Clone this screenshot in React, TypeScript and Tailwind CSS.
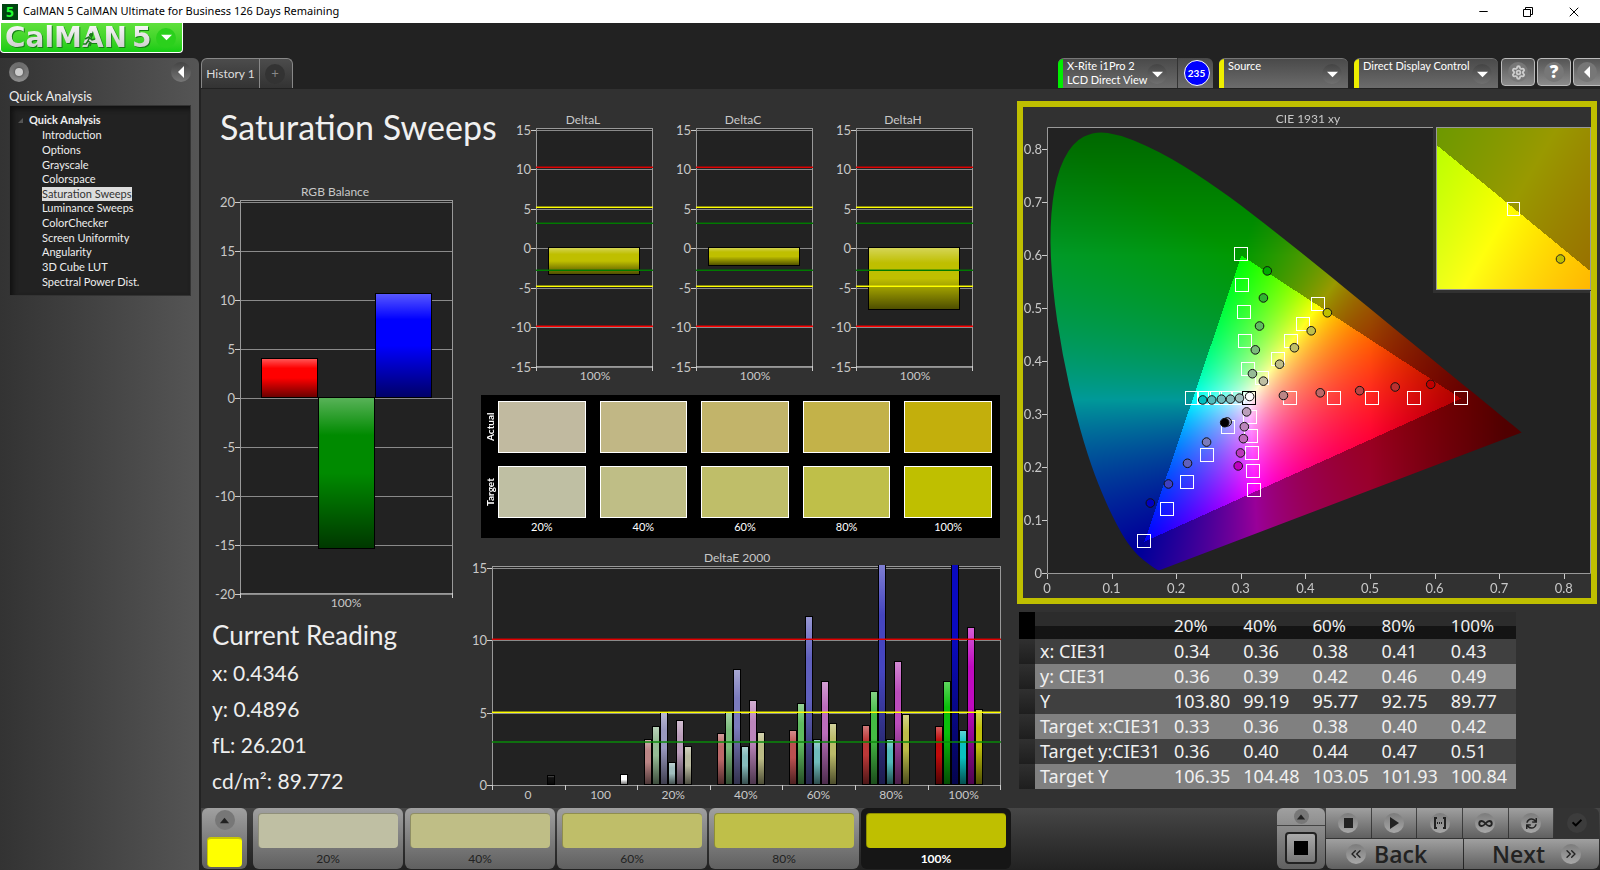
import { useLayoutEffect, useRef, type ReactNode } from 'react';
import { ChevronsLeft, ChevronsRight, Infinity as InfinityIcon, Minus, Settings, X } from 'lucide-react';
import { FaCheck, FaSync } from 'react-icons/fa';

const LEVELS = ['20%', '40%', '60%', '80%', '100%'];
const ACTUAL = ['#c1baa0', '#c1b785', '#c2b46a', '#c3b249', '#c3af0c'];
const TARGET = ['#bfbfa3', '#bfbe86', '#bfbe69', '#bfbf49', '#bfbf00'];

const NAV = [
  'Introduction',
  'Options',
  'Grayscale',
  'Colorspace',
  'Saturation Sweeps',
  'Luminance Sweeps',
  'ColorChecker',
  'Screen Uniformity',
  'Angularity',
  '3D Cube LUT',
  'Spectral Power Dist.',
];

const READINGS = [
  ['x:', '0.4346'],
  ['y:', '0.4896'],
  ['fL:', '26.201'],
  ['cd/m²:', '89.772'],
];

const ROWS = [
  ['x: CIE31', '0.34', '0.36', '0.38', '0.41', '0.43'],
  ['y: CIE31', '0.36', '0.39', '0.42', '0.46', '0.49'],
  ['Y', '103.80', '99.19', '95.77', '92.75', '89.77'],
  ['Target x:CIE31', '0.33', '0.36', '0.38', '0.40', '0.42'],
  ['Target y:CIE31', '0.36', '0.40', '0.44', '0.47', '0.51'],
  ['Target Y', '106.35', '104.48', '103.05', '101.93', '100.84'],
];

/* ---------- small pieces ---------- */

function Caret({ dir, size = 12, className = '' }: { dir: 'up' | 'down' | 'left' | 'right'; size?: number; className?: string }) {
  const points = { up: '1,9 6,3 11,9', down: '0,3 12,3 6,9', left: '9,0 9,12 3,6', right: '2,0 11,6 2,12' }[dir];
  return (
    <svg viewBox="0 0 12 12" width={size} height={size} className={className} aria-hidden="true">
      <polygon points={points} fill="currentColor" />
    </svg>
  );
}

function Knob({ children, className = '' }: { children?: ReactNode; className?: string }) {
  return (
    <span className={`flex h-5 w-5 shrink-0 items-center justify-center rounded-full ${className}`}>{children}</span>
  );
}

/* ---------- bar charts ---------- */

function Gloss() {
  return (
    <linearGradient id="gloss" x1="0" y1="0" x2="0" y2="1">
      <stop offset="0" stopColor="#fff" stopOpacity="0.35" />
      <stop offset="0.25" stopColor="#fff" stopOpacity="0" />
      <stop offset="0.5" stopColor="#000" stopOpacity="0" />
      <stop offset="1" stopColor="#000" stopOpacity="0.6" />
    </linearGradient>
  );
}

function Bar({ x, y, w, h, color }: { x: number; y: number; w: number; h: number; color: string }) {
  return (
    <g stroke="#000" shapeRendering="crispEdges">
      <rect x={x} y={y} width={w} height={h} fill={color} />
      <rect x={x} y={y} width={w} height={h} fill="url(#gloss)" />
    </g>
  );
}

type FrameProps = {
  left: number;
  right: number;
  top: number;
  bottom: number;
  zero: number;
  unit: number;
  ticks: number[];
};

function Frame({ left, right, top, bottom, zero, unit, ticks }: FrameProps) {
  return (
    <g shapeRendering="crispEdges">
      <rect x={left} y={top} width={right - left} height={bottom - top} fill="#222" />
      {ticks.map((t) => {
        const y = Math.round(zero - t * unit);
        return (
          <g key={t}>
            <rect x={left} y={y} width={right - left} height={1} fill="#8a8a8a" />
            <rect x={left - 5} y={y} width={5} height={1} fill="#ccc" />
            <text x={left - 5} y={y + 5} textAnchor="end" className="fill-[#c8c8c8] text-[13px]">
              {t}
            </text>
          </g>
        );
      })}
      <rect x={left + 0.5} y={top + 0.5} width={right - left} height={bottom - top} fill="none" stroke="#999" />
    </g>
  );
}

function Limit({ left, right, y, color }: { left: number; right: number; y: number; color: string }) {
  return (
    <g shapeRendering="crispEdges">
      <rect x={left} y={y} width={right - left} height={1} fill={color} />
      <rect x={left} y={y - 1} width={right - left} height={1} fill={color} opacity={0.45} />
    </g>
  );
}

function RgbBalance() {
  return (
    <svg viewBox="0 0 250 432" className="mt-6 w-[250px]" role="img" aria-label="RGB Balance">
      <defs>
        <Gloss />
      </defs>
      <text x={123} y={16} textAnchor="middle" className="fill-[#c8c8c8] text-[12px]">RGB Balance</text>
      <Frame left={28} right={240} top={20} bottom={413} zero={218} unit={9.8} ticks={[20, 15, 10, 5, 0, -5, -10, -15, -20]} />
      <Bar x={49.5} y={178.5} w={56} h={39} color="#f00" />
      <Bar x={106.5} y={217.5} w={56} h={151} color="#008a00" />
      <Bar x={163.5} y={113.5} w={56} h={104} color="#00f" />
      <path d="M28.5 413v5M240.5 413v5" stroke="#ccc" />
      <text x={134} y={427} textAnchor="middle" className="fill-[#c8c8c8] text-[12px]">100%</text>
    </svg>
  );
}

function DeltaChart({ title, value }: { title: string; value: number }) {
  const limits: [number, string][] = [
    [57, '#e00000'],
    [97, '#ff0'],
    [113, '#007a00'],
    [160, '#007a00'],
    [176, '#ff0'],
    [216, '#f00'],
  ];
  return (
    <svg viewBox="0 0 160 276" className="min-w-0 flex-1" role="img" aria-label={title}>
      <text x={83} y={14} textAnchor="middle" className="fill-[#c8c8c8] text-[12px]">{title}</text>
      <Frame left={36} right={152} top={18} bottom={256} zero={138} unit={7.9} ticks={[15, 10, 5, 0, -5, -10, -15]} />
      <Bar x={48.5} y={137.5} w={91} h={Math.round(value * 7.9)} color="#bfbf00" />
      {limits.map(([y, color]) => (
        <Limit key={y} left={36} right={153} y={y} color={color} />
      ))}
      <path d="M36.5 256v5M152.5 256v5" stroke="#ccc" />
      <text x={95} y={270} textAnchor="middle" className="fill-[#c8c8c8] text-[12px]">100%</text>
    </svg>
  );
}

const DELTA_E: { label: string; bars: [number, string][] }[] = [
  { label: '0', bars: [] },
  { label: '100', bars: [] },
  { label: '20%', bars: [[3.1, '#bb8585'], [4, '#96bb96'], [5, '#9999bf'], [1.5, '#a0bdbd'], [4.4, '#bb9ebb'], [2.6, '#bbbba0']] },
  { label: '40%', bars: [[3.5, '#bb6868'], [5, '#7bbb7b'], [7.9, '#7b7bbd'], [2.6, '#85bbbb'], [5.8, '#bb85bb'], [3.6, '#bbbb85']] },
  { label: '60%', bars: [[3.7, '#bb5050'], [5.6, '#5fbb5f'], [11.6, '#6060bd'], [3.1, '#70bbbb'], [7.1, '#bb6cbb'], [4.2, '#bbbb6a']] },
  { label: '80%', bars: [[4.1, '#bb3838'], [6.4, '#44bb44'], [15.6, '#4545bf'], [3.1, '#50bbbb'], [8.5, '#bb4cbb'], [4.8, '#bbbb48']] },
  { label: '100%', bars: [[4, '#bf0a0a'], [7.1, '#0abf0a'], [20.5, '#0a0abf'], [3.7, '#0abfbf'], [10.8, '#bf0abf'], [5.2, '#bfbf0a']] },
];

function DeltaE() {
  const zero = 237;
  const unit = 14.5;
  return (
    <svg viewBox="0 0 535 256" className="mt-[10px] w-full" role="img" aria-label="DeltaE 2000">
      <defs>
        <clipPath id="delta-e-plot">
          <rect x={22} y={17} width={509} height={221} />
        </clipPath>
      </defs>
      <text x={267} y={14} textAnchor="middle" className="fill-[#c8c8c8] text-[12px]">DeltaE 2000</text>
      <Frame left={22} right={530} top={18} bottom={237} zero={zero} unit={unit} ticks={[15, 10, 5, 0]} />
      <Bar x={77.5} y={zero - 9.5} w={7} h={9} color="#111" />
      <Bar x={150.5} y={zero - 10.5} w={7} h={10} color="#fff" />
      {DELTA_E.map(({ label, bars }, i) => (
        <g key={label}>
          <g clipPath="url(#delta-e-plot)">
            {bars.map(([v, color], j) => {
              const h = Math.round(v * unit);
              return <Bar key={color} x={Math.round(22 + i * 72.6 + 7) + j * 8 + 0.5} y={zero - h - 0.5} w={7} h={h} color={color} />;
            })}
          </g>
          <rect x={Math.round(22 + i * 72.6)} y={237} width={1} height={5} fill="#ccc" />
          <text x={58 + i * 72.6} y={251} textAnchor="middle" className="fill-[#c8c8c8] text-[12px]">{label}</text>
        </g>
      ))}
      <rect x={530} y={237} width={1} height={5} fill="#ccc" />
      <Limit left={22} right={531} y={91} color="#e00000" />
      <Limit left={22} right={531} y={164} color="#ff0" />
      <rect x={22} y={193} width={509} height={2} fill="#0a8a0a" opacity={0.75} />
    </svg>
  );
}

/* ---------- chromaticity diagram ---------- */

const PLOT = { width: 568, height: 491, x0: 24, y0: 466, sx: 646, sy: 530 };
const INSET = { left: 413, top: 20, width: 154, height: 162, cx: 0.42, cy: 0.5046, sx: 3230, sy: 3340 };

const LOCUS: [number, number][] = [
  [0.1741, 0.005], [0.1714, 0.0051], [0.1644, 0.0109], [0.1566, 0.0177], [0.144, 0.0297], [0.1355, 0.0399],
  [0.1241, 0.0578], [0.1096, 0.0868], [0.0913, 0.1327], [0.0687, 0.2007], [0.0454, 0.295], [0.0235, 0.4127],
  [0.0082, 0.5384], [0.0039, 0.6548], [0.0139, 0.7502], [0.0389, 0.812], [0.0743, 0.8338], [0.1142, 0.8262],
  [0.1547, 0.8059], [0.1929, 0.7816], [0.2296, 0.7543], [0.2658, 0.7243], [0.3016, 0.6923], [0.3373, 0.6589],
  [0.3731, 0.6245], [0.4087, 0.5896], [0.4441, 0.5547], [0.4788, 0.5202], [0.5125, 0.4866], [0.5448, 0.4544],
  [0.5752, 0.4242], [0.6029, 0.3965], [0.627, 0.3725], [0.6482, 0.3514], [0.6658, 0.334], [0.6915, 0.3083],
  [0.7079, 0.292], [0.7347, 0.2653],
];

const TARGET_POINTS: [number, number][] = [
  [0.376, 0.33], [0.445, 0.33], [0.503, 0.33], [0.568, 0.33], [0.641, 0.33],
  [0.311, 0.385], [0.307, 0.437], [0.305, 0.492], [0.302, 0.543], [0.3, 0.602],
  [0.28, 0.276], [0.247, 0.223], [0.216, 0.172], [0.186, 0.121], [0.15, 0.061],
  [0.295, 0.33], [0.277, 0.33], [0.26, 0.33], [0.243, 0.33], [0.225, 0.33],
  [0.314, 0.294], [0.3155, 0.2585], [0.3175, 0.226], [0.3195, 0.1925], [0.321, 0.157],
  [0.3335, 0.367], [0.357, 0.403], [0.378, 0.437], [0.397, 0.469], [0.42, 0.507],
];

const MEASURED: [number, number, string][] = [
  [0.366, 0.335, '#bb8585'], [0.423, 0.34, '#bb6868'], [0.484, 0.344, '#bb4545'], [0.539, 0.351, '#bb3030'], [0.594, 0.356, '#bf0000'],
  [0.318, 0.376, '#96bb96'], [0.3225, 0.421, '#7bbb7b'], [0.329, 0.466, '#5fbb5f'], [0.335, 0.519, '#30b530'], [0.341, 0.57, '#00aa00'],
  [0.279, 0.285, '#9999bf'], [0.275, 0.2836, '#000'], [0.247, 0.247, '#7b7bbd'], [0.2175, 0.207, '#6060bd'], [0.188, 0.168, '#4040bf'], [0.16, 0.132, '#0000bf'],
  [0.298, 0.33, '#a0bdbd'], [0.284, 0.328, '#85bbbb'], [0.27, 0.328, '#70bbbb'], [0.255, 0.3265, '#50bbbb'], [0.241, 0.3265, '#00bfbf'],
  [0.309, 0.304, '#bb9ebb'], [0.3055, 0.276, '#bb85bb'], [0.304, 0.2535, '#bb6cbb'], [0.2995, 0.2265, '#bb38bb'], [0.296, 0.202, '#bf00bf'],
  [0.335, 0.362, '#bfbfa3'], [0.36, 0.394, '#bfbe86'], [0.383, 0.425, '#bfbe69'], [0.409, 0.457, '#bfbf49'], [0.434, 0.491, '#bfbf00'],
];

const px = (x: number) => PLOT.x0 + x * PLOT.sx;
const py = (y: number) => PLOT.y0 - y * PLOT.sy;

// Chromaticity to display colour at full brightness, dimmed outside Rec.709.
function shade(x: number, y: number) {
  const z = 1 - x - y;
  const lin = [
    3.2406 * x - 1.5372 * y - 0.4986 * z,
    -0.9689 * x + 1.8758 * y + 0.0415 * z,
    0.0557 * x - 0.204 * y + 1.057 * z,
  ];
  const outside = Math.min(...lin) < 0;
  const max = Math.max(...lin);
  let k = outside ? 153 : 255;
  if (x > 0.5) k *= Math.max(0.52, 1 - (x - 0.5) * 2.3);
  if (outside && y > 0.6) k *= 1 - (y - 0.6) * 1.4;
  return lin.map((v) => (k * Math.max(0, v)) / max);
}

function paint(w: number, h: number, toXY: (i: number, j: number) => [number, number]) {
  const img = new ImageData(w, h);
  for (let j = 0; j < h; j++) {
    for (let i = 0; i < w; i++) {
      const [r, g, b] = shade(...toXY(i, j));
      img.data.set([r, g, b, 255], (j * w + i) * 4);
    }
  }
  const buf = document.createElement('canvas');
  buf.width = w;
  buf.height = h;
  buf.getContext('2d')!.putImageData(img, 0, 0);
  return buf;
}

function Gamut() {
  const ref = useRef<HTMLCanvasElement>(null);

  useLayoutEffect(() => {
    const ctx = ref.current?.getContext('2d');
    if (!ctx) return;
    ctx.clearRect(0, 0, PLOT.width, PLOT.height);
    ctx.fillStyle = '#222';
    ctx.fillRect(24, 20, 543, 446);
    ctx.save();
    ctx.beginPath();
    // midpoint quadratics keep the locus smooth, the purple line stays straight
    ctx.moveTo(px(LOCUS[0][0]), py(LOCUS[0][1]));
    for (let i = 1; i < LOCUS.length - 1; i++) {
      const [x1, y1] = LOCUS[i];
      const [x2, y2] = LOCUS[i + 1];
      ctx.quadraticCurveTo(px(x1), py(y1), px((x1 + x2) / 2), py((y1 + y2) / 2));
    }
    ctx.lineTo(px(0.7347), py(0.2653));
    ctx.closePath();
    ctx.clip();
    ctx.drawImage(
      paint(PLOT.width, PLOT.height, (i, j) => [(i - PLOT.x0) / PLOT.sx, (PLOT.y0 - j) / PLOT.sy]),
      0,
      0,
    );
    ctx.restore();
    ctx.fillStyle = '#313131';
    ctx.fillRect(INSET.left - 3, INSET.top, INSET.width + 4, INSET.height + 4);
    ctx.drawImage(
      paint(INSET.width, INSET.height, (i, j) => [
        INSET.cx + (i - INSET.width / 2) / INSET.sx,
        INSET.cy - (j - INSET.height / 2) / INSET.sy,
      ]),
      INSET.left,
      INSET.top,
    );
  }, []);

  return <canvas ref={ref} width={PLOT.width} height={PLOT.height} className="absolute inset-0 h-full w-full" />;
}

function CieChart() {
  const ticks = [0, 0.1, 0.2, 0.3, 0.4, 0.5, 0.6, 0.7, 0.8];
  return (
    <section className="relative mt-3 mr-[3px] ml-3 border-[6px] border-[#bfbf00] bg-[#313131]">
      <Gamut />
      <svg viewBox="0 0 568 491" className="relative block w-full" role="img" aria-label="CIE 1931 xy">
        <text x={285} y={16} textAnchor="middle" className="fill-[#c8c8c8] text-[12px]">CIE 1931 xy</text>
        <path d="M24.5 466V20.5H410M567.5 184V466.5H24.5" fill="none" stroke="#999" />
        {ticks.map((t) => (
          <g key={t}>
            <rect x={Math.round(px(t))} y={467} width={1} height={5} fill="#ccc" />
            <rect x={19} y={Math.round(py(t))} width={5} height={1} fill="#ccc" />
            <text x={px(t)} y={486} textAnchor="middle" className="fill-[#c8c8c8] text-[13px]">{t}</text>
            <text x={19} y={Math.round(py(t)) + 5} textAnchor="end" className="fill-[#c8c8c8] text-[13px]">{t}</text>
          </g>
        ))}
        {TARGET_POINTS.map(([x, y]) => (
          <rect key={`${x},${y}`} x={Math.round(px(x)) - 6.5} y={Math.round(py(y)) - 6.5} width={13} height={13} fill="none" stroke="#fff" />
        ))}
        <rect x={Math.round(px(0.3127)) - 6.5} y={Math.round(py(0.33)) - 6.5} width={13} height={13} fill="none" stroke="#000" />
        {MEASURED.map(([x, y, color]) => (
          <circle key={`${x},${y}`} cx={px(x)} cy={py(y)} r={4.3} fill={color} stroke="#111" />
        ))}
        <circle cx={px(0.3137)} cy={py(0.333)} r={4.3} fill="#fff" stroke="#111" />
        <rect x={413.5} y={20.5} width={154} height={162} fill="none" stroke="#999" />
        <rect x={484.5} y={95.5} width={12} height={13} fill="none" stroke="#fff" />
        <circle cx={537.5} cy={152} r={4.3} fill="#bfbf00" stroke="#222" />
      </svg>
    </section>
  );
}

/* ---------- panels ---------- */

function SwatchRow({ name, colors }: { name: string; colors: string[] }) {
  return (
    <div className="flex h-[52px]">
      <span className="flex w-[17px] rotate-180 items-center justify-center text-[10px] leading-4 font-bold [writing-mode:vertical-rl]">
        {name}
      </span>
      <div className="grid flex-1 grid-cols-5 gap-[14px]">
        {colors.map((c) => (
          <div key={c} className="border border-white" style={{ background: c }} />
        ))}
      </div>
    </div>
  );
}

function Swatches() {
  return (
    <section className="mt-[9px] mr-[5px] ml-[11px] flex h-[143px] flex-col gap-[13px] bg-black pt-[6px] pr-2 text-[11px] text-white">
      <SwatchRow name="Actual" colors={ACTUAL} />
      <SwatchRow name="Target" colors={TARGET} />
      <div className="-mt-[13px] grid grid-cols-5 gap-[14px] pl-[17px] text-center leading-[18px]">
        {LEVELS.map((l) => (
          <span key={l}>{l}</span>
        ))}
      </div>
    </section>
  );
}

function DataTable() {
  return (
    <table className="mt-2 ml-[14px] w-[497px] table-fixed border-collapse text-left font-['Noto_Sans','Open_Sans',sans-serif] text-[18px] leading-[24px] text-[#f0f0f0]">
      <colgroup>
        <col className="w-4" />
        <col className="w-[135px]" />
      </colgroup>
      <thead>
        <tr className="h-[27px] bg-linear-to-b from-[#2c2c2c] from-50% to-[#141414] to-50%">
          <th className="bg-black p-0" />
          <th className="p-0" />
          {LEVELS.map((l) => (
            <th key={l} scope="col" className="p-0 pl-1 text-[17px] font-normal">{l}</th>
          ))}
        </tr>
      </thead>
      <tbody>
        {ROWS.map(([name, ...cells], i) => (
          <tr key={name} className={i % 2 ? 'h-[25px] bg-[#808080]' : 'h-[25px] bg-[#404040]'}>
            <td className="bg-linear-to-b from-[#303030] to-[#1e1e1e] p-0" />
            <th scope="row" className="p-0 pl-[5px] align-top font-normal whitespace-nowrap">{name}</th>
            {cells.map((c, j) => (
              <td key={j} className="p-0 pl-1 align-top">{c}</td>
            ))}
          </tr>
        ))}
      </tbody>
    </table>
  );
}

function Sidebar() {
  return (
    <aside className="w-[199px] shrink-0 rounded-tr-md bg-linear-to-r from-[#333] to-[#555] pt-1 pr-2 pl-[9px]">
      <div className="flex justify-between">
        <button type="button" aria-label="Record">
          <Knob className="bg-linear-to-b from-[#6a6a6a] to-[#8c8c8c]">
            <span className="h-2 w-2 rounded-full bg-[#ccc] shadow-[0_0_3px_#333]" />
          </Knob>
        </button>
        <button type="button" aria-label="Collapse">
          <Knob className="bg-linear-to-b from-[#444] to-[#777] text-white">
            <Caret dir="left" />
          </Knob>
        </button>
      </div>
      <h2 className="mt-1 h-[19px] text-[13px] leading-5 text-[#eee]">Quick Analysis</h2>
      <nav className="h-[191px] border border-[#333] bg-[#222] pt-[6px] text-[11px] text-[#eee] shadow-[inset_3px_3px_5px_#111]">
        <div className="flex h-4 items-center font-bold">
          <svg viewBox="0 0 6 6" className="mr-[6px] ml-2 h-[5px] w-[5px]" aria-hidden="true">
            <polygon points="6,0 6,6 0,6" fill="#555" />
          </svg>
          Quick Analysis
        </div>
        <ul className="grid h-[161px] auto-rows-fr pl-8">
          {NAV.map((item) => (
            <li key={item} className="flex items-center">
              <a
                href="#"
                className={item === 'Saturation Sweeps' ? 'bg-[#ddd] leading-[14px] text-[#333]' : 'leading-[14px]'}
              >
                {item}
              </a>
            </li>
          ))}
        </ul>
      </nav>
    </aside>
  );
}

function DeviceButton({ bar, lines, width, inset = 'mr-[6px]' }: { bar: string; lines: string[]; width: string; inset?: string }) {
  return (
    <button type="button" className={`flex h-[30px] overflow-hidden border-t border-[#777] bg-linear-to-b from-[#4a4a4a] to-[#6c6c6c] text-left text-[11px] leading-[14px] text-white ${width}`}>
      <span className={`h-full w-[5px] shrink-0 ${bar}`} />
      <span className="flex-1 pl-1 whitespace-nowrap">
        {lines.map((l) => (
          <span key={l} className="block">{l}</span>
        ))}
      </span>
      <Knob className={`mt-[5px] bg-linear-to-b from-[#444] to-[#707070] ${inset}`}>
        <Caret dir="down" size={11} />
      </Knob>
    </button>
  );
}

const SQUARE_BUTTON =
  'flex h-7 w-[34px] shrink-0 items-center justify-center rounded border border-[#bbb] bg-linear-to-b from-[#555] to-[#8c8c8c] text-white';

function TopBar() {
  return (
    <header className="flex h-[31px] items-start overflow-hidden">
      <div className="flex h-[30px] overflow-hidden rounded-t-md border border-b-0 border-[#888] bg-linear-to-b from-[#4c4c4c] to-[#333] text-[12px] text-[#ddd]" role="tablist">
        <button type="button" role="tab" aria-selected="true" className="w-[57px] whitespace-nowrap">History 1</button>
        <button type="button" aria-label="Add history" className="flex w-[33px] items-center justify-center border-l border-[#888] pr-[2px]">
          <Knob className="bg-[#333] text-[13px] text-[#888]">+</Knob>
        </button>
      </div>
      <div className="-mr-[7px] ml-auto flex shrink-0">
        <DeviceButton bar="bg-[#0e0]" lines={['X-Rite i1Pro 2', 'LCD Direct View']} width="w-[119px] rounded-tl-md" inset="mr-[10px]" />
        <div className="mr-[6px] flex h-[30px] w-[36px] items-center justify-center rounded-tr-md border-l border-[#333] bg-linear-to-b from-[#4a4a4a] to-[#6c6c6c] pl-[2px]">
          <span className="flex h-[26px] w-[26px] items-center justify-center rounded-full border border-white bg-[#00f] text-[10px] font-bold text-white">
            235
          </span>
        </div>
        <DeviceButton bar="bg-[#ee0]" lines={['Source']} width="mr-[6px] w-[129px] rounded-t-md" />
        <DeviceButton bar="bg-[#ee0]" lines={['Direct Display Control']} width="mr-[3px] w-[144px] rounded-t-md" />
        <div className="flex gap-[2px]">
          <button type="button" className={SQUARE_BUTTON} aria-label="Settings">
            <Knob className="bg-[#777]"><Settings size={15} strokeWidth={3} className="text-[#ccc]" /></Knob>
          </button>
          <button type="button" className={SQUARE_BUTTON} aria-label="Help">
            <Knob className="bg-[#777] font-['Open_Sans'] text-[17px] font-extrabold">?</Knob>
          </button>
          <button type="button" className={SQUARE_BUTTON} aria-label="Collapse panel">
            <Knob className="mr-[6px] bg-[#777]"><Caret dir="left" /></Knob>
          </button>
        </div>
      </div>
    </header>
  );
}

const GREY = 'bg-linear-to-b from-[#a0a0a0] to-[#606060]';
const DISC = 'bg-linear-to-b from-[#7c7c7c] to-[#a8a8a8]';

function BottomBar() {
  const transport = [
    { name: 'Stop', icon: <span className="h-[10px] w-[9px] bg-[#222]" /> },
    { name: 'Play', icon: <Caret dir="right" /> },
    { name: 'Read series', icon: <BracketIcon /> },
    { name: 'Continuous', icon: <InfinityIcon size={15} strokeWidth={3} /> },
    { name: 'Refresh', icon: <FaSync size={11} /> },
  ];
  return (
    <footer className="flex h-[62px] shrink-0 bg-linear-to-b from-[#464646] to-[#222] pl-px">
      <div className={`flex h-[61px] w-[45px] shrink-0 flex-col items-center rounded-md ${GREY}`}>
        <button type="button" aria-label="Expand patterns" className="mt-[2px]">
          <Knob className="h-4 w-4 bg-[#777] text-[#222]"><Caret dir="up" size={11} /></Knob>
        </button>
        <span className="mt-[7px] h-[30px] w-[35px] rounded-sm border-t-2 border-l border-[#c8c800] bg-[#ff0]" />
      </div>
      <div className="ml-[6px] flex gap-[2px]">
        {LEVELS.map((l, i) => {
          const active = i === LEVELS.length - 1;
          return (
            <button
              key={l}
              type="button"
              className={`flex h-[61px] w-[150px] flex-col rounded-md px-[5px] pt-[5px] text-[12px] ${active ? 'bg-[#161616] font-bold text-white' : `${GREY} text-[#222]`}`}
            >
              <span className="h-9 w-full rounded border-t border-l border-black/25" style={{ background: TARGET[i] }} />
              <span className="w-full text-center leading-[21px]">{l}</span>
            </button>
          );
        })}
      </div>
      <div className="ml-auto flex h-[61px] shrink-0 gap-px pr-px">
        <div className={`flex w-12 flex-col items-center rounded-md ${GREY}`}>
          <button type="button" aria-label="Expand transport" className="flex h-[18px] w-full items-center justify-center border-b border-[#444]">
            <Knob className="h-[15px] w-[15px] bg-[#777] text-[#222]"><Caret dir="up" size={10} /></Knob>
          </button>
          <button type="button" aria-label="Stop reading" className="mt-[6px] flex h-8 w-8 items-center justify-center rounded border-2 border-[#222] bg-linear-to-b from-[#aaa] to-[#777]">
            <span className="h-[14px] w-[14px] bg-black" />
          </button>
        </div>
        <div className="flex w-[273px] flex-col gap-px text-[#222]">
          <div className="flex h-[30px] gap-px">
            {transport.map(({ name, icon }) => (
              <button key={name} type="button" aria-label={name} className={`flex flex-1 items-center justify-center ${GREY}`}>
                <Knob className={DISC}>{icon}</Knob>
              </button>
            ))}
            <button type="button" aria-label="Accept" className="flex flex-1 items-center justify-center rounded-tr-md bg-[#333] text-black">
              <Knob className="bg-[#3c3c3c]"><FaCheck size={10} /></Knob>
            </button>
          </div>
          <div className="flex h-[30px] gap-px font-['Open_Sans'] text-[23px] leading-[30px] font-semibold">
            <button type="button" className={`flex flex-1 items-center rounded-bl-md pl-5 ${GREY}`}>
              <Knob className={`mr-2 ${DISC}`}><ChevronsLeft size={16} /></Knob>
              Back
            </button>
            <button type="button" className={`flex flex-1 items-center justify-end rounded-br-md pr-[18px] ${GREY}`}>
              Next
              <Knob className={`ml-4 ${DISC}`}><ChevronsRight size={16} /></Knob>
            </button>
          </div>
        </div>
      </div>
    </footer>
  );
}

function BracketIcon() {
  return (
    <svg viewBox="0 0 14 12" width={14} height={12} fill="none" stroke="currentColor" strokeWidth={2} aria-hidden="true">
      <path d="M4 1H2V11H4M10 1H12V11H10" />
      <path d="M4 6H10" strokeDasharray="1 1" />
    </svg>
  );
}

function Logo() {
  const letters =
    "bg-linear-to-b from-white to-[#c4c4c4] bg-clip-text font-['DejaVu_Sans'] text-[28px] leading-[33px] font-bold text-transparent drop-shadow-[1px_1px_0_#158015]";
  return (
    <button type="button" aria-label="CalMAN 5 menu" className="flex h-[30px] w-[183px] items-center rounded-b border border-t-0 border-white bg-linear-to-b from-[#5fe03c] to-[#12cc12] pl-1">
      <span className="relative">
        <span className={letters}>CalMAN</span>
        {/* runner crossing the letter A */}
        <svg viewBox="0 0 16 16" className="absolute top-[11px] left-[77px] h-4 w-4" fill="none" stroke="#1d7a1d" aria-hidden="true">
          <circle cx="9" cy="3" r="1.500" fill="#1d7a1d" />
          <path d="M8 5L6 9L9 11L8 14M6 9L4 12H1M3 7L7 5L10 8L13 7" strokeWidth="1.500" />
        </svg>
      </span>
      <span className={`ml-[5px] ${letters}`}>5</span>
      <Knob className="mr-[6px] ml-auto bg-[#2bd01c] text-white"><Caret dir="down" size={11} /></Knob>
    </button>
  );
}

export default function App() {
  return (
    <div className="flex min-h-screen flex-col overflow-hidden bg-[#222] font-['Lato','Open_Sans',sans-serif]">
      <div className="flex h-[23px] items-center bg-white pl-[2px] font-['Noto_Sans','Open_Sans',sans-serif] text-[11px] text-black">
        <span className="mr-[5px] flex h-4 w-4 items-center justify-center bg-[#041] text-[14px] font-bold text-[#2f3]">5</span>
        CalMAN 5 CalMAN Ultimate for Business 126 Days Remaining
        <div className="mr-[18px] ml-auto flex items-center gap-8">
          <button type="button" aria-label="Minimize"><Minus size={13} strokeWidth={2} /></button>
          <button type="button" aria-label="Restore">
            <svg viewBox="0 0 12 12" width={12} height={12} fill="none" stroke="currentColor" aria-hidden="true">
              <path d="M1.500 3.500H8.500V10.500H1.500ZM3.500 3.500V1.500H10.500V8.500H8.500" />
            </svg>
          </button>
          <button type="button" aria-label="Close"><X size={16} strokeWidth={1.5} /></button>
        </div>
      </div>
      <div className="h-[35px]">
        <Logo />
      </div>
      <div className="flex flex-1">
        <Sidebar />
        <div className="ml-[2px] flex min-w-0 flex-1 flex-col">
          <TopBar />
          <main className="grid flex-1 grid-cols-[269px_minmax(0,535fr)_minmax(0,595fr)] bg-[#313131]">
            <div className="pt-3 pl-[11px]">
              <h1 className="ml-2 h-[55px] text-[34px] leading-[52px] whitespace-nowrap text-[#f0f0f0]">Saturation Sweeps</h1>
              <RgbBalance />
              <h2 className="mt-[3px] text-[26px] leading-10 text-[#eee]">Current Reading</h2>
              <ul className="text-[21px] leading-9 text-[#eee]">
                {READINGS.map(([k, v]) => (
                  <li key={k}>{k} {v}</li>
                ))}
              </ul>
            </div>
            <div className="pt-[21px]">
              <div className="flex pr-[25px] pl-[30px]">
                <DeltaChart title="DeltaL" value={3.45} />
                <DeltaChart title="DeltaC" value={2.3} />
                <DeltaChart title="DeltaH" value={7.8} />
              </div>
              <Swatches />
              <DeltaE />
            </div>
            <div>
              <CieChart />
              <DataTable />
            </div>
          </main>
          <BottomBar />
        </div>
      </div>
    </div>
  );
}
